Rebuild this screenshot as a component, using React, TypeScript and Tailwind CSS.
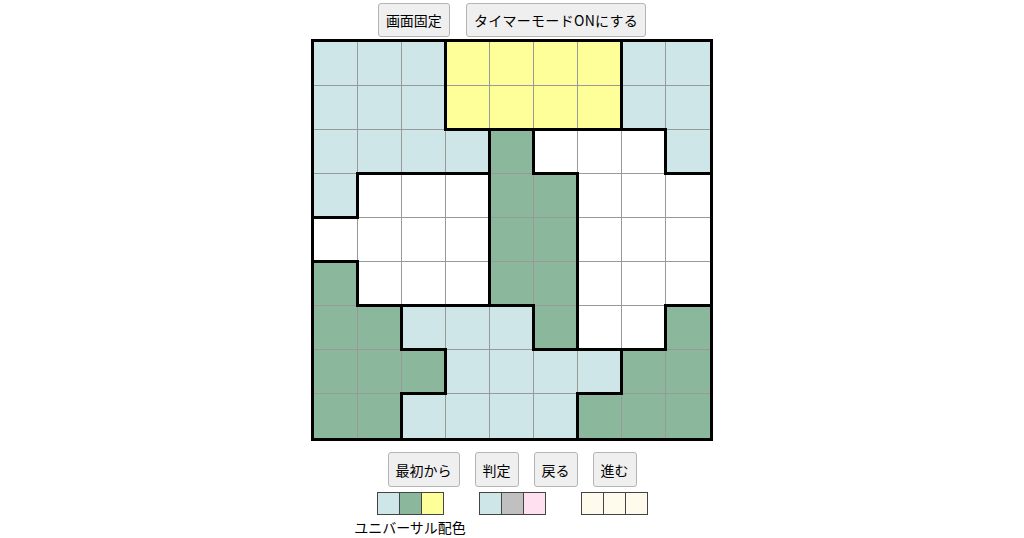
const L = 'bg-[#cfe6e8]';
const G = 'bg-[#8bb89d]';
const Y = 'bg-[#ffff99]';
const W = 'bg-white';

const rows = [
  'LLLYYYYLL',
  'LLLYYYYLL',
  'LLLLGWWWL',
  'LWWWGGWWW',
  'WWWWGGWWW',
  'GWWWGGWWW',
  'GGLLLGWWG',
  'GGGLLLLGG',
  'GGLLLLGGG',
];

const fill: Record<string, string> = { L, G, Y, W };

function Cell({ r, c }: { r: number; c: number }) {
  const v = rows[r][c];
  const lastCol = c === 8;
  const lastRow = r === 8;
  const thickRight = !lastCol && rows[r][c + 1] !== v;
  const thickBottom = !lastRow && rows[r + 1][c] !== v;
  return (
    <div
      className={`relative h-[44px] w-[44px] ${fill[v]} ${lastCol ? '' : 'border-r-[1.5px] border-r-[#999]'} ${
        lastRow ? '' : 'border-b-[1.5px] border-b-[#999]'
      }`}
    >
      {thickRight && (
        <div className="absolute right-[-2px] top-[-2px] bottom-[-2px] z-10 w-[3px] bg-black" />
      )}
      {thickBottom && (
        <div className="absolute bottom-[-2px] left-[-2px] right-[-2px] z-10 h-[3px] bg-black" />
      )}
    </div>
  );
}

function Btn({ children, h = 'h-[35px]' }: { children: React.ReactNode; h?: string }) {
  return (
    <button
      className={`${h} rounded-[3px] border border-[#b4b4b4] bg-[#efefef] px-[7px] text-[14px] leading-none text-black`}
    >
      {children}
    </button>
  );
}

function Swatches({ colors }: { colors: string[] }) {
  return (
    <div className="flex border-l border-[#444]">
      {colors.map((c, i) => (
        <div key={i} className={`h-[23px] w-[22px] border-y border-r border-[#444] ${c}`} />
      ))}
    </div>
  );
}

export default function App() {
  return (
    <div
      className="flex h-[538px] w-full flex-col items-center overflow-hidden bg-white"
      style={{ fontFamily: '"Noto Sans CJK JP", "Noto Sans", sans-serif' }}
    >
      {/* header buttons */}
      <div className="mt-[3px] flex gap-[16px]">
        <Btn h="h-[34px]">画面固定</Btn>
        <Btn h="h-[34px]">
          <span className="tracking-[0.3px]">タイマーモードONにする</span>
        </Btn>
      </div>

      {/* board */}
      <div className="mt-[2px] grid grid-cols-9 border-[3px] border-black">
        {rows.map((row, r) =>
          row.split('').map((_, c) => <Cell key={`${r}-${c}`} r={r} c={c} />)
        )}
      </div>

      {/* controls */}
      <div className="mt-[11px] flex gap-[15px]">
        <Btn>最初から</Btn>
        <Btn>判定</Btn>
        <Btn>戻る</Btn>
        <Btn>進む</Btn>
      </div>

      <div className="mt-[5px] flex items-start gap-[35px]">
        <div className="flex w-[67px] flex-col items-center">
          <Swatches colors={[L, G, Y]} />
          <span className="mt-[4px] whitespace-nowrap text-[14px] leading-[16px]">ユニバーサル配色</span>
        </div>
        <Swatches colors={['bg-[#cfe6e8]', 'bg-[#c0c0c0]', 'bg-[#ffe0f0]']} />
        <Swatches colors={['bg-[#fffbec]', 'bg-[#fffbec]', 'bg-[#fffbec]']} />
      </div>
    </div>
  );
}
